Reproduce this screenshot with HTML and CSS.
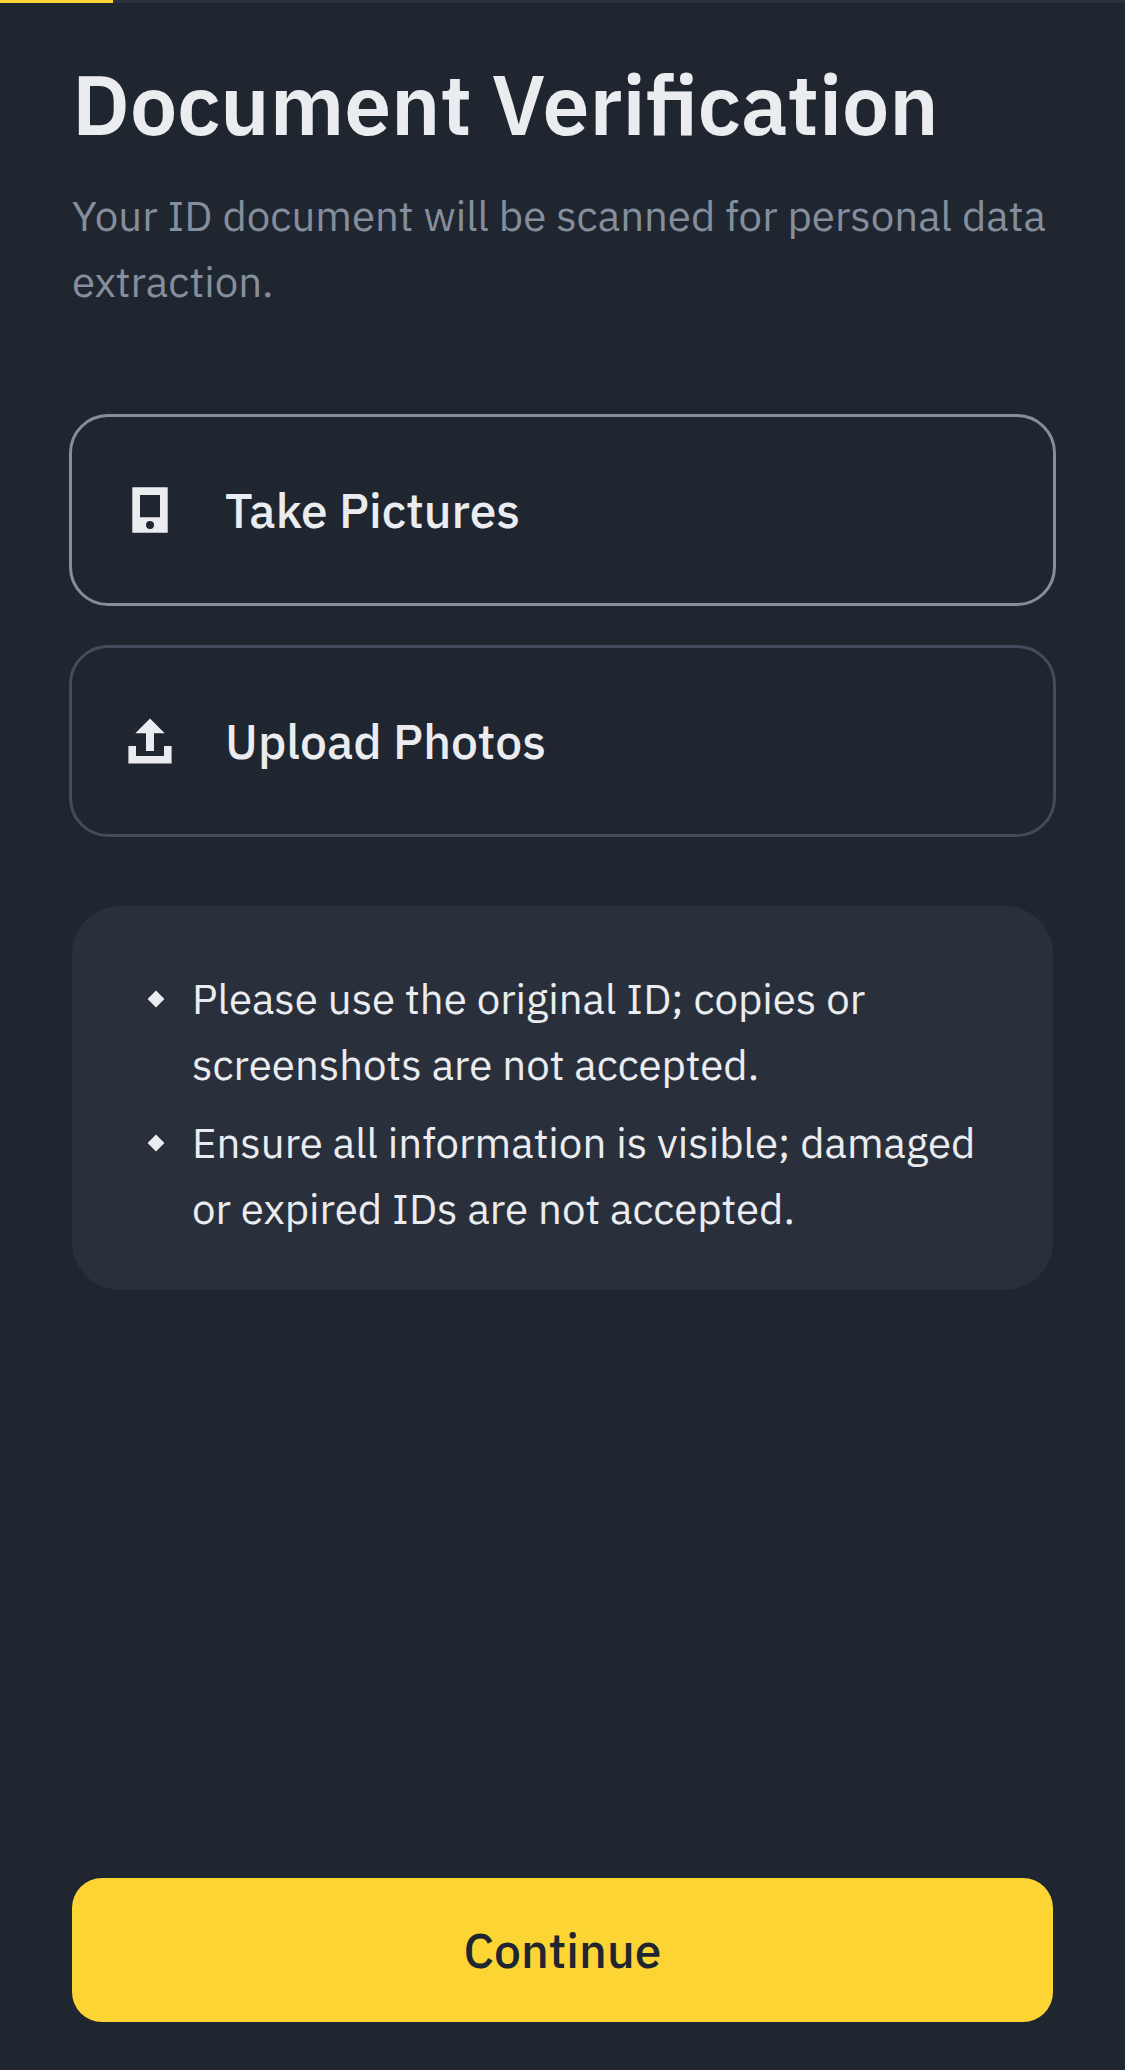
FILE: index.html
```html
<!DOCTYPE html>
<html lang="en">
<head>
  <meta charset="utf-8">
  <title>Document Verification</title>
  <link rel="stylesheet" href="styles.css">
</head>
<body>
  <div class="screen">
    <div class="progress"><div class="progress-bar" style="width: 10%"></div></div>
    <main class="content">
      <h1 class="title">Document Verification</h1>
      <p class="subtitle">Your ID document will be scanned for personal data extraction.</p>
      <div class="options">
        <button class="option option-selected" type="button">
          <svg class="option-icon" viewBox="0 0 48 48" aria-hidden="true">
            <path fill-rule="evenodd" d="M6.3 1.3h35.4v45.4H6.3zM14 9v22.3h20V9zM24 35a4 4 0 1 0 0 8a4 4 0 1 0 0-8z"/>
          </svg>
          <span>Take Pictures</span>
        </button>
        <button class="option" type="button">
          <svg class="option-icon" viewBox="0 0 48 48" aria-hidden="true">
            <path d="M24 1.6L38.7 16.3H28V34h-8V16.3H9.3zM2.4 29H10v10h28V29h7.6v17.6H2.4z"/>
          </svg>
          <span>Upload Photos</span>
        </button>
      </div>
      <ul class="notes">
        <li class="note">
          <svg class="note-icon" viewBox="0 0 24 24" aria-hidden="true"><path d="M12 3.6L20.4 12L12 20.4L3.6 12z"/></svg>
          <span>Please use the original ID; copies or screenshots are not accepted.</span>
        </li>
        <li class="note">
          <svg class="note-icon" viewBox="0 0 24 24" aria-hidden="true"><path d="M12 3.6L20.4 12L12 20.4L3.6 12z"/></svg>
          <span>Ensure all information is visible; damaged or expired IDs are not accepted.</span>
        </li>
      </ul>
    </main>
    <footer class="footer">
      <button class="continue" type="button">Continue</button>
    </footer>
  </div>
</body>
</html>
```
FILE: styles.css
```css
* {
  box-sizing: border-box;
}

body {
  margin: 0;
  background: #202630;
  color: #eaecef;
  font-family: "IBM Plex Sans", Roboto, sans-serif;
  -webkit-font-smoothing: antialiased;
}

.screen {
  display: flex;
  flex-direction: column;
  min-height: 2070px;
}

.progress {
  height: 3px;
  background: #29313d;
}

.progress-bar {
  height: 100%;
  background: #fcd535;
}

.content {
  flex: 1;
  padding: 47px 72px 0;
}

.title {
  margin: 0 0 25px;
  font-size: 84px;
  font-weight: 600;
  line-height: 108px;
}

.subtitle {
  margin: 0 0 99px;
  color: #848e9c;
  font-size: 42px;
  line-height: 66px;
}

.options {
  display: flex;
  flex-direction: column;
  gap: 39px;
  margin: 0 -3px 69px;
}

.option {
  display: flex;
  align-items: center;
  gap: 51px;
  height: 192px;
  padding: 0 54px;
  border: 3px solid #434c5a;
  border-radius: 39px;
  background: transparent;
  color: inherit;
  font-family: inherit;
  font-size: 48px;
  font-weight: 500;
  line-height: 66px;
  text-align: left;
}

.option-selected {
  border-color: #848e9c;
}

.option-icon {
  width: 48px;
  height: 48px;
  fill: currentColor;
}

.notes {
  display: flex;
  flex-direction: column;
  gap: 12px;
  margin: 0;
  padding: 60px 72px 48px;
  border-radius: 48px;
  background: #29303c;
  list-style: none;
  font-size: 42px;
  line-height: 66px;
}

.note {
  display: flex;
  gap: 24px;
}

.note-icon {
  flex: none;
  width: 24px;
  height: 24px;
  margin-top: 21px;
  fill: currentColor;
}

.footer {
  padding: 0 72px 48px;
}

.continue {
  display: block;
  width: 100%;
  height: 144px;
  border: 0;
  border-radius: 30px;
  background: #fcd535;
  color: #202630;
  font-family: inherit;
  font-size: 48px;
  font-weight: 500;
}
```
